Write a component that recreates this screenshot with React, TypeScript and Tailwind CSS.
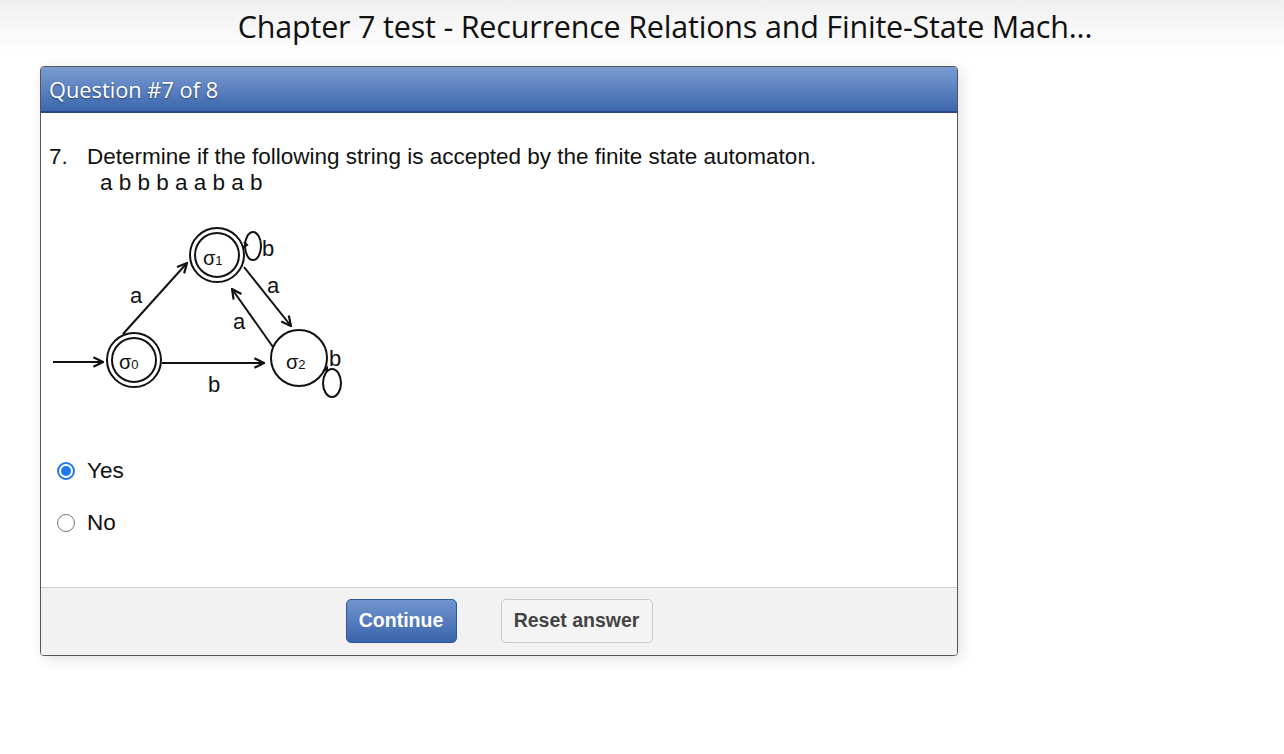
import { useState } from 'react'

/** Finite state automaton drawing used in question 7 */
function Automaton() {
  // origin of this svg sits at page (50, 222)
  return (
    <svg width="310" height="180" viewBox="0 0 310 180" className="block">
      <defs>
        <marker id="arr" viewBox="0 0 10 10" refX="9" refY="5" markerWidth="6" markerHeight="6" orient="auto-start-reverse">
          <path d="M1 1 L9 5 L1 9" fill="none" stroke="#111" strokeWidth="1.8" />
        </marker>
      </defs>
      <g stroke="#111" strokeWidth="2" fill="none">
        {/* start arrow */}
        <line x1="2" y1="140" x2="52" y2="140" markerEnd="url(#arr)" />
        {/* sigma 0 */}
        <circle cx="83" cy="138" r="27" />
        <circle cx="83" cy="138" r="22" />
        {/* sigma 1 */}
        <circle cx="166" cy="33" r="27" />
        <circle cx="166" cy="33" r="22" />
        {/* sigma 2 */}
        <circle cx="248" cy="136" r="28" />
        {/* a: s0 -> s1 */}
        <line x1="72" y1="112" x2="136" y2="41" markerEnd="url(#arr)" />
        {/* b: s0 -> s2 */}
        <line x1="111" y1="141" x2="213" y2="141" markerEnd="url(#arr)" />
        {/* a: s1 -> s2 */}
        <line x1="193" y1="45" x2="240" y2="104" markerEnd="url(#arr)" />
        {/* a: s2 -> s1 */}
        <line x1="222" y1="125" x2="181" y2="67" markerEnd="url(#arr)" />
        {/* loop on s1 */}
        <ellipse cx="202" cy="24" rx="8" ry="14" />
        <path d="M193 20 l3 3 l-4 2" />
        {/* loop on s2 */}
        <ellipse cx="281" cy="161" rx="9" ry="14" />
        <path d="M273 149 l3 -3 l0 4" />
      </g>
      <g fill="#111" fontFamily="'Liberation Sans', Arial, sans-serif">
        <text x="79" y="81" fontSize="22">a</text>
        <text x="157" y="170" fontSize="22">b</text>
        <text x="216" y="71" fontSize="22">a</text>
        <text x="182" y="107" fontSize="22">a</text>
        <text x="211" y="34" fontSize="22">b</text>
        <text x="278" y="144" fontSize="22">b</text>
        <text x="68" y="147" fontSize="20">σ<tspan fontSize="13">0</tspan></text>
        <text x="152" y="43" fontSize="20">σ<tspan fontSize="13">1</tspan></text>
        <text x="235" y="147" fontSize="20">σ<tspan fontSize="13">2</tspan></text>
      </g>
    </svg>
  )
}

function Radio({ checked, label, onClick }: { checked: boolean; label: string; onClick: () => void }) {
  return (
    <label onClick={onClick} className="flex items-center gap-[12px] h-[26px] cursor-pointer">
      {checked ? (
        <span className="w-[18px] h-[18px] rounded-full border-2 border-[#1f77f0] bg-white flex items-center justify-center">
          <span className="w-[10px] h-[10px] rounded-full bg-[#1f77f0]" />
        </span>
      ) : (
        <span className="w-[18px] h-[18px] rounded-full border border-[#767676] bg-white" />
      )}
      <span className="text-[22.5px] text-[#111]">{label}</span>
    </label>
  )
}

export default function App() {
  const [answer, setAnswer] = useState<'yes' | 'no' | null>('yes')

  return (
    <div className="min-h-[754px] bg-white font-['Liberation_Sans',Arial,sans-serif]">
      <div className="h-[52px] bg-gradient-to-b from-[#efefef] to-white flex items-center justify-center pl-[46px] pt-[2px]">
        <h1 className="text-[30.5px] text-[#111] font-['Open_Sans',sans-serif] tracking-[-0.2px]">
          Chapter 7 test - Recurrence Relations and Finite-State Mach...
        </h1>
      </div>

      <div className="ml-[40px] mt-[14px] w-[918px] border border-[#555] rounded-[4px] overflow-hidden bg-white shadow-[3px_3px_14px_rgba(0,0,0,0.12)]">
        <div className="h-[46px] bg-gradient-to-b from-[#7b9cd1] to-[#3c67ae] border-b-2 border-[#2a4888] flex items-center px-[8px] pt-[3px]">
          <span className="text-white text-[21.8px] font-['Open_Sans',sans-serif] [text-shadow:0_1px_2px_rgba(0,0,0,0.45)]">
            Question #7 of 8
          </span>
        </div>

        <div className="h-[474px] pt-[31px] pl-[8px]">
          <div className="flex text-[22.5px] leading-[26px] text-[#111]">
            <span className="w-[38px]">7.</span>
            <div>
              <p>Determine if the following string is accepted by the finite state automaton.</p>
              <p className="pl-[13px]">a b b b a a b a b</p>
            </div>
          </div>

          <div className="mt-[26px] ml-[2px]">
            <Automaton />
          </div>

          <div className="mt-[56px] ml-[8px] flex flex-col gap-[26px]">
            <Radio checked={answer === 'yes'} label="Yes" onClick={() => setAnswer('yes')} />
            <Radio checked={answer === 'no'} label="No" onClick={() => setAnswer('no')} />
          </div>
        </div>

        <div className="h-[68px] bg-[#f2f2f2] border-t border-[#cfcfcf] flex justify-center items-start pt-[11px] gap-[44px]">
          <button className="w-[111px] h-[44px] rounded-[5px] border border-[#2d569e] bg-gradient-to-b from-[#7195cf] to-[#3a64ab] text-white font-bold text-[19.5px]">
            Continue
          </button>
          <button onClick={() => setAnswer(null)} className="w-[152px] h-[44px] rounded-[5px] border border-[#c9c9c9] bg-[#f4f4f4] text-[#444] font-bold text-[19.5px]">
            Reset answer
          </button>
        </div>
      </div>
    </div>
  )
}
